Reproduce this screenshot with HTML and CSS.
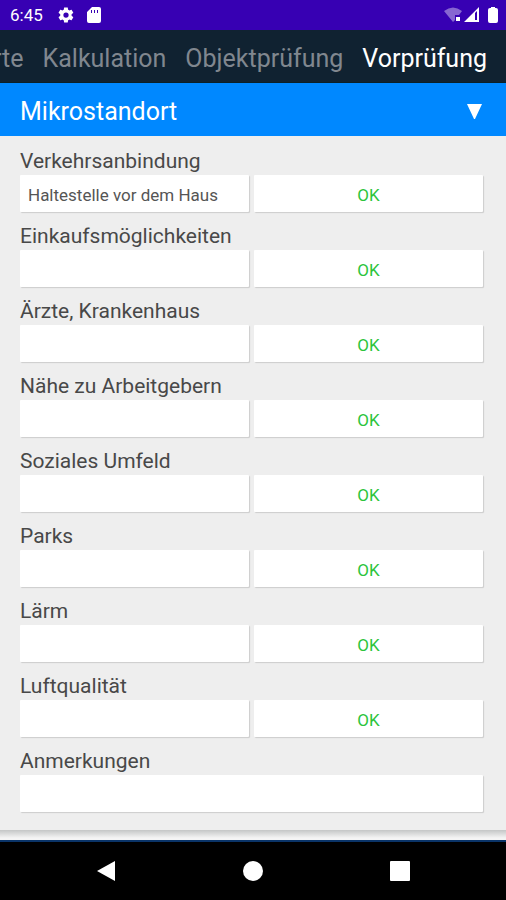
FILE: index.html
```
<!DOCTYPE html>
<html lang="de">
<head>
    <meta charset="UTF-8">
    <meta name="viewport" content="width=device-width, initial-scale=1.0">
    <title>Vorprüfung</title>
    <link rel="stylesheet" href="styles.css">
</head>
<body>

<div class="status">
    <span class="time">6:45</span>
    <svg class="gear" width="18" height="18" viewBox="0 0 24 24" fill="#fff"><path d="M19.4 13c.1-.3.1-.7.1-1s0-.7-.1-1l2.100-1.600c.2-.2.2-.4.1-.6l-2-3.500c-.1-.2-.4-.3-.6-.2l-2.500 1c-.5-.4-1.100-.7-1.700-1l-.4-2.600c0-.3-.2-.5-.5-.5h-4c-.3 0-.5.2-.5.4l-.4 2.700c-.6.2-1.200.6-1.700 1l-2.500-1c-.2-.1-.5 0-.6.2l-2 3.500c-.1.200-.1.500.1.600l2.100 1.600c0 .3-.1.700-.1 1s0 .7.1 1l-2.100 1.600c-.2.200-.2.400-.1.600l2 3.500c.1.200.4.300.6.200l2.500-1c.5.400 1.100.700 1.700 1l.4 2.600c0 .3.200.5.5.5h4c.3 0 .5-.2.500-.4l.4-2.700c.6-.2 1.200-.6 1.700-1l2.500 1c.2.100.5 0 .6-.2l2-3.500c.1-.2.100-.5-.1-.6zM12 15.500a3.500 3.500 0 1 1 0-7 3.500 3.500 0 0 1 0 7z"/></svg>
    <svg class="sdcard" width="14" height="16" viewBox="0 0 14 16"><path fill="#fff" fill-rule="evenodd" d="M5 0h7q2 0 2 2v12q0 2-2 2H2q-2 0-2-2V5zM4 3v3h1V3zM7 3v3h1V3zM10 3v3h1V3z"/></svg>
    <svg class="signals" width="54" height="18" viewBox="0 0 54 18">
        <path fill="#fff" opacity=".4" d="M0 5Q9-2 18 5L15 9H11V14L9 16Z"/>
        <path fill="#fff" d="M12 11h4v4h-4z"/>
        <path fill="#fff" fill-rule="evenodd" d="M35 1V16H20ZM31 7V14H33V5Z"/>
        <path fill="#fff" d="M47 1h4v1h1q2 0 2 2v11q0 2-2 2h-6q-2 0-2-2V4q0-2 2-2h1z"/>
    </svg>
</div>

<nav>
    <button>Werte</button>
    <button>Kalkulation</button>
    <button>Objektprüfung</button>
    <button class="active">Vorprüfung</button>
</nav>

<main>
    <button class="section-title">
        <span>Mikrostandort</span>
        <svg width="15" height="15" viewBox="0 0 15 15"><path fill="#fff" d="M0 0h15L8 15H7z"/></svg>
    </button>
    <form class="section">
        <div class="field">
            <label for="verkehr">Verkehrsanbindung</label>
            <div class="row">
                <input type="text" id="verkehr" value="Haltestelle vor dem Haus">
                <button type="button">OK</button>
            </div>
        </div>
        <div class="field">
            <label for="einkauf">Einkaufsmöglichkeiten</label>
            <div class="row">
                <input type="text" id="einkauf">
                <button type="button">OK</button>
            </div>
        </div>
        <div class="field">
            <label for="aerzte">Ärzte, Krankenhaus</label>
            <div class="row">
                <input type="text" id="aerzte">
                <button type="button">OK</button>
            </div>
        </div>
        <div class="field">
            <label for="arbeit">Nähe zu Arbeitgebern</label>
            <div class="row">
                <input type="text" id="arbeit">
                <button type="button">OK</button>
            </div>
        </div>
        <div class="field">
            <label for="umfeld">Soziales Umfeld</label>
            <div class="row">
                <input type="text" id="umfeld">
                <button type="button">OK</button>
            </div>
        </div>
        <div class="field">
            <label for="parks">Parks</label>
            <div class="row">
                <input type="text" id="parks">
                <button type="button">OK</button>
            </div>
        </div>
        <div class="field">
            <label for="laerm">Lärm</label>
            <div class="row">
                <input type="text" id="laerm">
                <button type="button">OK</button>
            </div>
        </div>
        <div class="field">
            <label for="luft">Luftqualität</label>
            <div class="row">
                <input type="text" id="luft">
                <button type="button">OK</button>
            </div>
        </div>
        <div class="field">
            <label for="anmerkungen">Anmerkungen</label>
            <div class="row">
                <input type="text" id="anmerkungen">
            </div>
        </div>
    </form>
</main>

<footer>
    <button aria-label="Zurück"><svg width="20" height="22" viewBox="0 0 20 22"><path fill="#fff" d="M19 1v20L1 11z"/></svg></button>
    <button aria-label="Start"><svg width="20" height="20" viewBox="0 0 20 20"><circle cx="10" cy="10" r="10" fill="#fff"/></svg></button>
    <button aria-label="Übersicht"><svg width="20" height="20" viewBox="0 0 20 20"><rect width="20" height="20" rx="1" fill="#fff"/></svg></button>
</footer>

</body>
</html>
```
FILE: styles.css
```
* {
    box-sizing: border-box;
}
body {
    font-family: Roboto, sans-serif;
    margin: 0;
    min-height: 100vh;
    display: flex;
    flex-direction: column;
    background: #eee;
    color: #484848;
}
button {
    font-family: inherit;
    border: none;
    padding: 0;
    cursor: pointer;
}
.status {
    display: flex;
    align-items: center;
    height: 30px;
    padding: 0 8px 0 10px;
    background: #3700b3;
    color: white;
}
.time {
    font-size: 17px;
}
.gear {
    margin-left: 14px;
}
.sdcard {
    margin-left: 12px;
}
.signals {
    margin-left: auto;
}
nav {
    display: flex;
    justify-content: flex-end;
    gap: 19px;
    height: 53px;
    padding: 0 19px 0 0;
    overflow: hidden;
    background: #102231;
    border-bottom: 1px solid #0b2027;
}
nav button {
    flex: none;
    padding-top: 4px;
    background: none;
    color: #80878f;
    font-size: 25px;
}
nav .active {
    color: white;
}
main {
    flex: 1;
    background: linear-gradient(#c4c6c6, #f4f4f4 8px) bottom / 100% 10px no-repeat;
    padding-bottom: 10px;
}
.section-title {
    display: flex;
    justify-content: space-between;
    align-items: center;
    width: 100%;
    height: 53px;
    padding: 3px 24px 0 20px;
    background: #0088ff;
    color: white;
    font-size: 25px;
}
.section {
    padding: 12px 23px 18px 20px;
}
.field {
    margin-bottom: 11px;
}
.field:last-child {
    margin-bottom: 0;
}
.field label {
    display: block;
    font-size: 21px;
    line-height: 27px;
}
.row {
    display: grid;
    grid-auto-flow: column;
    grid-auto-columns: 1fr;
    gap: 5px;
}
.row input,
.row button {
    width: 100%;
    height: 37px;
    background: white;
    border: none;
    border-radius: 1px;
    box-shadow: 1px 1px 1px #ccc;
    font-size: 17px;
}
.row input {
    padding: 2px 8px 0;
    color: #555;
    font-family: inherit;
}
.row button {
    padding-top: 2px;
    color: #2cc43c;
}
footer {
    display: flex;
    justify-content: space-between;
    height: 60px;
    padding: 0 96px;
    background: black;
    border-top: 2px solid #0a3468;
}
footer button {
    display: flex;
    align-items: center;
    background: none;
}
```
